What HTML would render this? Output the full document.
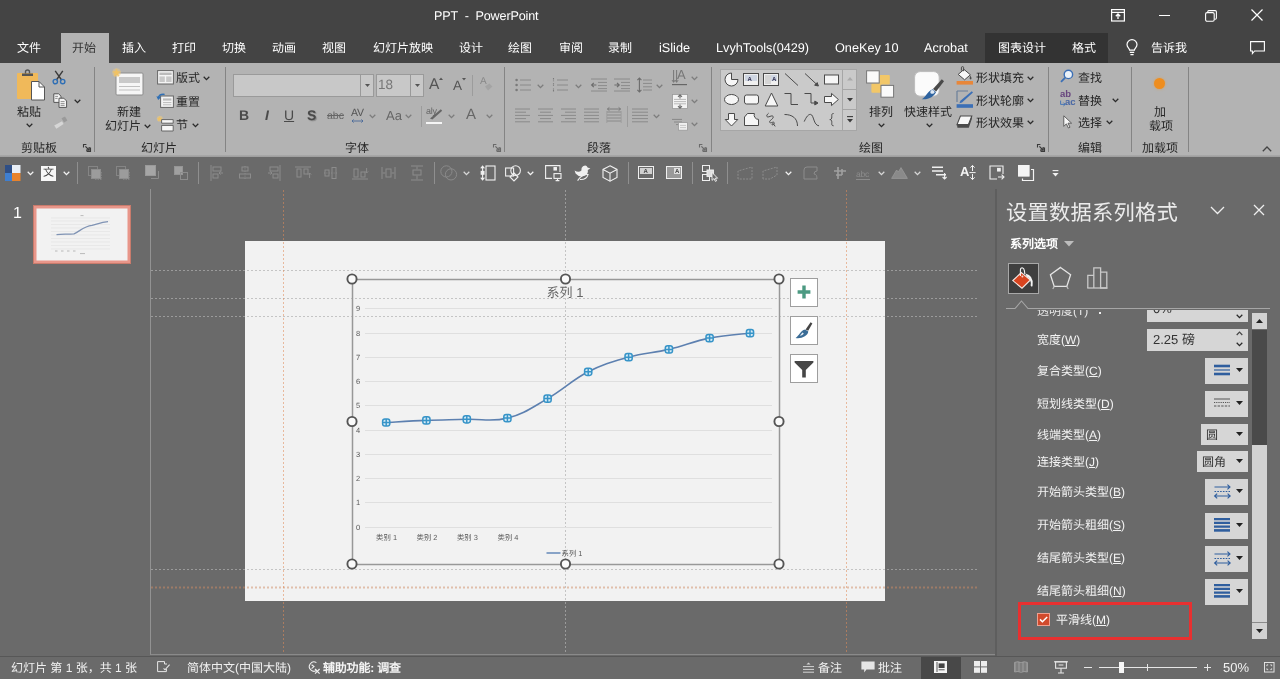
<!DOCTYPE html>
<html lang="zh-CN">
<head>
<meta charset="utf-8">
<title>PPT - PowerPoint</title>
<style>
*{box-sizing:border-box;margin:0;padding:0}
html,body{width:1280px;height:679px;overflow:hidden;background:#6a6a6a}
body{font-family:"Liberation Sans",sans-serif;font-size:13px;color:#fff;position:relative;will-change:transform;-webkit-font-smoothing:antialiased;text-rendering:geometricPrecision}
.abs,.t,.rt,.qt{position:absolute}
.t{white-space:nowrap;line-height:16px;font-size:12px;color:#fff}
.l{font-size:12.7px}
.rt{white-space:nowrap;line-height:14px;font-size:12px;color:#262626}
#title{left:0;top:0;width:1280px;height:63px;background:#444}
#ribbon{left:0;top:63px;width:1280px;height:94px;background:#b3b3b3}
#ribbonline{left:0;top:155px;width:1280px;height:2px;background:linear-gradient(#aaa,#9c9c9c)}
#qat{left:0;top:157px;width:1280px;height:30px;background:#6a6a6a}
#work{left:0;top:187px;width:1280px;height:470px;background:#6a6a6a}
#status{left:0;top:656px;width:1280px;height:23px;background:#6a6a6a;border-top:1px solid #575757}
.sep{position:absolute;width:1px;background:#848484}
svg{position:absolute;overflow:visible}
</style>
</head>
<body>
<!-- TITLE BAR -->
<div id="title" class="abs"></div>
<!--TITLE-START-->
<div class="t" style="left:434px;top:8px;font-size:12.6px;letter-spacing:-0.15px">PPT&nbsp; -&nbsp; PowerPoint</div>
<!-- window controls -->
<svg style="left:1111px;top:9px" width="14" height="13" viewBox="0 0 14 13" fill="none" stroke="#fff" stroke-width="1.2"><rect x="0.6" y="0.6" width="12.8" height="11.4"/><path d="M0.6 3.4H13.4" /><path d="M7 10V5.2M4.8 7.2L7 5L9.2 7.2" stroke-width="1.3"/></svg>
<div class="abs" style="left:1159px;top:15px;width:11px;height:1px;background:#fff"></div>
<svg style="left:1205px;top:9.5px" width="12" height="12" viewBox="0 0 12 12" fill="none" stroke="#fff" stroke-width="1.1"><rect x="0.6" y="2.6" width="8.6" height="8.6" rx="1.5"/><path d="M2.8 2.4V1.6Q2.8 0.6 3.8 0.6H10.2Q11.4 0.6 11.4 1.8V8Q11.4 9.2 10.2 9.2H9.4"/></svg>
<svg style="left:1251px;top:9px" width="12" height="12" viewBox="0 0 12 12" fill="none" stroke="#fff" stroke-width="1.2"><path d="M0.5 0.5L11.5 11.5M11.5 0.5L0.5 11.5"/></svg>
<!-- tabs -->
<div class="abs" style="left:61px;top:33px;width:48px;height:30px;background:#b3b3b3"></div>
<div class="abs" style="left:985px;top:33px;width:123px;height:30px;background:#333"></div>
<div class="t" style="left:17px;top:40px">文件</div>
<div class="t" style="left:72px;top:40px;color:#333">开始</div>
<div class="t" style="left:122px;top:40px">插入</div>
<div class="t" style="left:172px;top:40px">打印</div>
<div class="t" style="left:222px;top:40px">切换</div>
<div class="t" style="left:272px;top:40px">动画</div>
<div class="t" style="left:322px;top:40px">视图</div>
<div class="t" style="left:373px;top:40px">幻灯片放映</div>
<div class="t" style="left:459px;top:40px">设计</div>
<div class="t" style="left:508px;top:40px">绘图</div>
<div class="t" style="left:559px;top:40px">审阅</div>
<div class="t" style="left:608px;top:40px">录制</div>
<div class="t l" style="left:659px;top:40px">iSlide</div>
<div class="t l" style="left:716px;top:40px">LvyhTools(0429)</div>
<div class="t l" style="left:835px;top:40px">OneKey 10</div>
<div class="t l" style="left:924px;top:40px">Acrobat</div>
<div class="t" style="left:998px;top:40px">图表设计</div>
<div class="t" style="left:1072px;top:40px">格式</div>
<svg style="left:1126px;top:39px" width="12" height="17" viewBox="0 0 12 17" fill="none" stroke="#fff" stroke-width="1.2"><path d="M3.6 11.2C3.6 9.4 1 8.6 1 5.6A5 5 0 0 1 11 5.6C11 8.6 8.4 9.4 8.4 11.2Z"/><path d="M3.8 13.4H8.2M4.4 15.6H7.6"/></svg>
<div class="t" style="left:1151px;top:40px">告诉我</div>
<svg style="left:1250px;top:41px" width="15" height="14" viewBox="0 0 15 14" fill="none" stroke="#fff" stroke-width="1.1"><path d="M0.6 0.6H14.4V10H4.6L2.4 12.6V10H0.6Z"/></svg>
<!--TITLE-END-->
<!-- RIBBON -->
<div id="ribbon" class="abs"></div>
<div id="ribbonline" class="abs"></div>
<!--R1-START-->
<svg width="0" height="0" style="left:0;top:0"><defs>
<symbol id="chev" viewBox="0 0 7 5" overflow="visible"><path d="M0.7 0.8L3.5 3.6L6.3 0.8" fill="none" stroke="#2b2b2b" stroke-width="1.3"/></symbol>
<symbol id="chevd" viewBox="0 0 7 5" overflow="visible"><path d="M0.7 0.8L3.5 3.6L6.3 0.8" fill="none" stroke="#7d7d7d" stroke-width="1.3"/></symbol>
<symbol id="chevw" viewBox="0 0 7 5" overflow="visible"><path d="M0.7 0.8L3.5 3.6L6.3 0.8" fill="none" stroke="#f2f2f2" stroke-width="1.3"/></symbol>
<symbol id="launch" viewBox="0 0 8 8" overflow="visible"><path d="M0.5 3.4V0.5H3.4M7.5 3.6V7.5H3.6" fill="none" stroke="#3a3a3a" stroke-width="1.1"/><path d="M2.4 2.4L6 6M6.2 3V6.2H3" fill="none" stroke="#3a3a3a" stroke-width="1.2"/></symbol>
</defs></svg>
<!-- separators -->
<div class="sep" style="left:94px;top:67px;height:85px"></div>
<div class="sep" style="left:225px;top:67px;height:85px"></div>
<div class="sep" style="left:504px;top:67px;height:85px"></div>
<div class="sep" style="left:711px;top:67px;height:85px"></div>
<div class="sep" style="left:1048px;top:67px;height:85px"></div>
<div class="sep" style="left:1131px;top:67px;height:85px"></div>
<div class="sep" style="left:1188px;top:67px;height:85px"></div>
<!-- ===== Clipboard ===== -->
<svg style="left:16px;top:69px" width="30" height="32" viewBox="0 0 30 32">
 <rect x="1" y="4" width="21" height="26" rx="1" fill="#f0b95a"/>
 <path d="M6 4.5H17V7H6Z" fill="#555"/><path d="M9.5 4.5V2.8Q9.5 1 11.5 1Q13.5 1 13.5 2.8V4.5" fill="none" stroke="#555" stroke-width="1.4"/>
 <path d="M15.5 12.5H23L28.5 18V31H15.5Z" fill="#fff" stroke="#555" stroke-width="1"/><path d="M23 12.5V18H28.5" fill="none" stroke="#555" stroke-width="1"/>
</svg>
<div class="rt" style="left:17px;top:105px">粘贴</div>
<svg style="left:26px;top:123px" width="7" height="5"><use href="#chev"/></svg>
<!-- scissors -->
<svg style="left:52px;top:70px" width="14" height="15" viewBox="0 0 14 15" fill="none">
 <path d="M3.2 0.8L9.6 10M10.8 0.8L4.4 10" stroke="#3b3b3b" stroke-width="1.4"/>
 <circle cx="3.3" cy="11.6" r="2.2" stroke="#2f6fb5" stroke-width="1.4"/><circle cx="10.7" cy="11.6" r="2.2" stroke="#2f6fb5" stroke-width="1.4"/>
</svg>
<!-- copy -->
<svg style="left:53px;top:93px" width="15" height="15" viewBox="0 0 15 15">
 <path d="M0.8 0.8H5.6L8 3.2V9.4H0.8Z" fill="#f4f4f4" stroke="#555" stroke-width="1"/>
 <path d="M6 5.2H10.8L13.6 8V14.4H6Z" fill="#f4f4f4" stroke="#555" stroke-width="1"/>
 <path d="M2.2 3.4H5M2.2 5.4H4.6M7.6 8.6H11.6M7.6 10.6H11.6M7.6 12.4H11.6" stroke="#777" stroke-width="0.8"/>
</svg>
<svg style="left:74px;top:99px" width="7" height="5"><use href="#chev"/></svg>
<!-- format painter (disabled) -->
<svg style="left:53px;top:116px" width="16" height="14" viewBox="0 0 16 14">
 <path d="M8.5 2.2L12 0.6L14.4 4.6L11 6.4Z" fill="#9a9a9a"/><path d="M1.2 9.5L9 5.2L10.6 8L3.4 12.8Z" fill="#d6d6d6"/>
</svg>
<div class="rt" style="left:21px;top:141px">剪贴板</div>
<svg style="left:83px;top:144px" width="8" height="8"><use href="#launch"/></svg>
<!-- ===== Slides ===== -->
<svg style="left:112px;top:68px" width="32" height="28" viewBox="0 0 32 28">
 <rect x="4" y="5" width="27" height="22" rx="1" fill="#f6f6f6" stroke="#8c8c8c" stroke-width="1"/>
 <rect x="7" y="9" width="21" height="6" fill="#c9c9c9"/><path d="M7 18.5H28M7 22H28" stroke="#c0c0c0" stroke-width="1.2"/>
 <circle cx="4.6" cy="4.6" r="4.4" fill="#f3cd7c" opacity="0.45"/><path d="M4.5 0.5L5.7 3.3L8.6 3.6L6.4 5.6L7 8.5L4.5 7L2 8.5L2.6 5.6L0.4 3.6L3.3 3.3Z" fill="#f0c264"/>
</svg>
<div class="rt" style="left:117px;top:105px">新建</div>
<div class="rt" style="left:105px;top:119px">幻灯片</div>
<svg style="left:144px;top:124px" width="7" height="5"><use href="#chev"/></svg>
<!-- layout -->
<svg style="left:157px;top:70px" width="17" height="15" viewBox="0 0 17 15">
 <rect x="0.6" y="0.6" width="15.8" height="13.4" fill="#f4f4f4" stroke="#666" stroke-width="1"/>
 <rect x="2.4" y="2.6" width="12.2" height="2.4" fill="#bbb"/><rect x="2.4" y="6.4" width="5.4" height="5.6" fill="#c8c8c8"/><rect x="9.2" y="6.4" width="5.4" height="5.6" fill="#c8c8c8"/>
</svg>
<div class="rt" style="left:176px;top:71px">版式</div>
<svg style="left:203px;top:76px" width="7" height="5"><use href="#chev"/></svg>
<!-- reset -->
<svg style="left:156px;top:92px" width="18" height="16" viewBox="0 0 18 16">
 <rect x="4.6" y="4" width="12.8" height="11.4" fill="#f4f4f4" stroke="#666" stroke-width="1"/>
 <rect x="7" y="6.4" width="8.4" height="2.2" fill="#bbb"/><path d="M7 10.6H15.4M7 12.8H15.4" stroke="#bbb" stroke-width="1"/>
 <path d="M2.2 6.2Q3.4 1.6 8.6 2.4" fill="none" stroke="#2f6fb5" stroke-width="1.5"/><path d="M0.4 4.2L2.2 8L5 5.2Z" fill="#2f6fb5"/>
</svg>
<div class="rt" style="left:176px;top:95px">重置</div>
<!-- section -->
<svg style="left:157px;top:116px" width="17" height="16" viewBox="0 0 17 16">
 <circle cx="2.8" cy="2.8" r="3" fill="#f3cd7c" opacity="0.5"/><path d="M2.6 0.2L3.3 2L5.2 2.2L3.8 3.4L4.2 5.2L2.6 4.2L1 5.2L1.4 3.4L0 2.2L1.9 2Z" fill="#f0c264"/>
 <path d="M4.6 3.6H16.2V7.2H4.6Z" fill="#f6f6f6" stroke="#666" stroke-width="1"/><path d="M4.6 9.4H16.2V15H4.6Z" fill="#f6f6f6" stroke="#666" stroke-width="1"/>
</svg>
<div class="rt" style="left:176px;top:118px">节</div>
<svg style="left:192px;top:123px" width="7" height="5"><use href="#chev"/></svg>
<div class="rt" style="left:141px;top:141px">幻灯片</div>
<!-- ===== Font ===== -->
<div class="abs" style="left:233px;top:74px;width:141px;height:23px;background:#c8c8c8;border:1px solid #9a9a9a"></div>
<div class="abs" style="left:360px;top:75px;width:1px;height:21px;background:#9a9a9a"></div>
<svg style="left:364.5px;top:84px" width="5" height="3" viewBox="0 0 5 3"><path d="M0 0H5L2.5 3Z" fill="#555"/></svg>
<div class="abs" style="left:376px;top:74px;width:48px;height:23px;background:#c8c8c8;border:1px solid #9a9a9a"></div>
<div class="abs" style="left:410px;top:75px;width:1px;height:21px;background:#9a9a9a"></div>
<svg style="left:414.5px;top:84px" width="5" height="3" viewBox="0 0 5 3"><path d="M0 0H5L2.5 3Z" fill="#555"/></svg>
<div class="rt" style="left:378px;top:78px;font-size:13.5px;color:#777">18</div>
<div class="rt" style="left:429px;top:77px;font-size:15.5px;line-height:16px;color:#555">A</div>
<svg style="left:439px;top:77px" width="4" height="3" viewBox="0 0 4 3"><path d="M0 3L2 0.4L4 3Z" fill="#555"/></svg>
<div class="rt" style="left:453px;top:79px;font-size:13.5px;line-height:14px;color:#555">A</div>
<svg style="left:462px;top:78px" width="4" height="3" viewBox="0 0 4 3"><path d="M0 0L2 2.6L4 0Z" fill="#555"/></svg>
<div class="sep" style="left:472px;top:75px;height:21px;background:#9c9c9c"></div>
<div class="rt" style="left:480px;top:75px;font-size:10px;color:#888">A</div>
<svg style="left:482px;top:83px" width="11" height="8" viewBox="0 0 11 8"><path d="M3 3.4L7.4 0.6L10.4 3.6L6 7.4Z" fill="#a4a4a4"/></svg>
<!-- row2 -->
<div class="rt" style="left:239px;top:107px;font-size:14px;line-height:16px;font-weight:bold;color:#4a4a4a">B</div>
<div class="rt" style="left:265px;top:107px;font-size:14px;line-height:16px;font-style:italic;font-weight:bold;color:#4a4a4a">I</div>
<div class="rt" style="left:284px;top:107px;font-size:14px;line-height:16px;text-decoration:underline;color:#4a4a4a">U</div>
<div class="rt" style="left:307px;top:107px;font-size:14px;line-height:16px;font-weight:bold;color:#4a4a4a;text-shadow:1px 1px 1px #888">S</div>
<div class="rt" style="left:327px;top:109px;font-size:10.5px;text-decoration:line-through;color:#666">abc</div>
<div class="rt" style="left:351px;top:106px;font-size:10.5px;color:#555;letter-spacing:-0.3px">AV</div>
<svg style="left:351px;top:119px" width="13" height="4" viewBox="0 0 13 4"><path d="M1 2H12M2.6 0.4L1 2L2.6 3.6M10.4 0.4L12 2L10.4 3.6" fill="none" stroke="#4a6a9a" stroke-width="0.9"/></svg>
<svg style="left:369px;top:114px" width="7" height="5"><use href="#chevd"/></svg>
<div class="rt" style="left:386px;top:108px;font-size:13px;line-height:16px;color:#666">Aa</div>
<svg style="left:405px;top:114px" width="7" height="5"><use href="#chevd"/></svg>
<div class="sep" style="left:421px;top:106px;height:21px;background:#9c9c9c"></div>
<div class="rt" style="left:426px;top:104px;font-size:9px;color:#666;letter-spacing:-0.3px">aly</div>
<svg style="left:428px;top:108px" width="15" height="12" viewBox="0 0 15 12"><path d="M2 10.5L12.8 1.2L14.2 2.8L4.4 11.4Z" fill="#666"/></svg>
<div class="abs" style="left:426px;top:121.5px;width:16px;height:2.5px;background:#f5f5f5"></div>
<svg style="left:448px;top:114px" width="7" height="5"><use href="#chevd"/></svg>
<div class="rt" style="left:466px;top:106px;font-size:15px;line-height:17px;color:#666">A</div>
<svg style="left:486px;top:114px" width="7" height="5"><use href="#chevd"/></svg>
<div class="rt" style="left:345px;top:141px">字体</div>
<svg style="left:493px;top:144px" width="8" height="8" opacity="0.6"><use href="#launch"/></svg>
<!--R1-END-->
<!--R2-START-->
<!-- ===== Paragraph (disabled look) ===== -->
<svg style="left:515px;top:78px" width="16" height="14" viewBox="0 0 16 14"><circle cx="1.6" cy="2" r="1.3" fill="#7a7a7a"/><circle cx="1.6" cy="7" r="1.3" fill="#7a7a7a"/><circle cx="1.6" cy="12" r="1.3" fill="#7a7a7a"/><path d="M5 2H16M5 7H16M5 12H16" stroke="#8a8a8a" stroke-width="1"/></svg>
<svg style="left:537px;top:84px" width="7" height="5"><use href="#chevd"/></svg>
<svg style="left:552px;top:78px" width="16" height="14" viewBox="0 0 16 14"><path d="M1.5 0V3.4M1.5 5.2V8.6M1.5 10.4V14" stroke="#7a7a7a" stroke-width="1.1" stroke-dasharray="1 0.6"/><path d="M5 2H16M5 7H16M5 12H16" stroke="#8a8a8a" stroke-width="1"/></svg>
<svg style="left:575px;top:84px" width="7" height="5"><use href="#chevd"/></svg>
<svg style="left:591px;top:78px" width="16" height="14" viewBox="0 0 16 14"><path d="M0 1H16M7 4.4H16M7 7.6H16M0 13H16M7 10.6H16" stroke="#8a8a8a" stroke-width="1"/><path d="M5.4 7H0.8M2.8 4.8L0.6 7L2.8 9.2" fill="none" stroke="#6c6c6c" stroke-width="1.2"/></svg>
<svg style="left:614px;top:78px" width="16" height="14" viewBox="0 0 16 14"><path d="M0 1H16M7 4.4H16M7 7.6H16M0 13H16M7 10.6H16" stroke="#8a8a8a" stroke-width="1"/><path d="M0.4 7H5M3 4.8L5.2 7L3 9.2" fill="none" stroke="#6c6c6c" stroke-width="1.2"/></svg>
<svg style="left:637px;top:77px" width="15" height="16" viewBox="0 0 15 16"><path d="M6 3H15M6 6.4H15M6 9.8H15M6 13H15" stroke="#8a8a8a" stroke-width="1"/><path d="M2.4 1V15M0.4 3.2L2.4 1L4.4 3.2M0.4 12.8L2.4 15L4.4 12.8" fill="none" stroke="#6c6c6c" stroke-width="1.1"/></svg>
<svg style="left:656px;top:84px" width="7" height="5"><use href="#chevd"/></svg>
<!-- text direction -->
<svg style="left:672px;top:69px" width="16" height="17" viewBox="0 0 16 17"><path d="M1.6 1V13M4.6 1V13" stroke="#777" stroke-width="1"/><path d="M0 11L1.6 13.4L3.2 11M3 11L4.6 13.4L6.2 11" fill="none" stroke="#777" stroke-width="0.9"/><path d="M0 15.6H15" stroke="#666" stroke-width="1.2"/></svg>
<div class="rt" style="left:677px;top:68px;font-size:13px;color:#777">A</div>
<svg style="left:691px;top:76px" width="7" height="5"><use href="#chevd"/></svg>
<!-- align text -->
<svg style="left:672px;top:94px" width="16" height="15" viewBox="0 0 16 15"><rect x="0.5" y="0.5" width="15" height="14" fill="#f3f3f3" stroke="#999" stroke-width="0.8"/><path d="M2 5.4H14M2 7.6H14M2 9.8H14" stroke="#aaa" stroke-width="0.8"/><path d="M8 0.8V4.4M6 2.8L8 0.8L10 2.8M8 14.2V10.6M6 12.2L8 14.2L10 12.2" fill="none" stroke="#6c6c6c" stroke-width="1.1"/></svg>
<svg style="left:691px;top:99px" width="7" height="5"><use href="#chevd"/></svg>
<!-- smartart -->
<svg style="left:672px;top:118px" width="16" height="13" viewBox="0 0 16 13"><path d="M0 1.4H10M2 4H10M4 6.6H8" stroke="#888" stroke-width="1"/><rect x="6.4" y="4.6" width="9" height="7.6" fill="#f0f0f0" stroke="#999" stroke-width="0.8"/><path d="M8 7.4H14M8 9.6H14" stroke="#bbb" stroke-width="0.8"/></svg>
<svg style="left:691px;top:122px" width="7" height="5"><use href="#chevd"/></svg>
<!-- row2 aligns -->
<svg style="left:515px;top:108px" width="16" height="15" viewBox="0 0 16 15"><path d="M0 1H15M0 4.2H11M0 7.4H15M0 10.6H11M0 13.8H15" stroke="#8a8a8a" stroke-width="1"/></svg>
<svg style="left:538px;top:108px" width="15" height="15" viewBox="0 0 15 15"><path d="M0 1H15M2 4.2H13M0 7.4H15M2 10.6H13M0 13.8H15" stroke="#8a8a8a" stroke-width="1"/></svg>
<svg style="left:561px;top:108px" width="15" height="15" viewBox="0 0 15 15"><path d="M0 1H15M4 4.2H15M0 7.4H15M4 10.6H15M0 13.8H15" stroke="#8a8a8a" stroke-width="1"/></svg>
<svg style="left:584px;top:108px" width="15" height="15" viewBox="0 0 15 15"><path d="M0 1H15M0 4.2H15M0 7.4H15M0 10.6H15M0 13.8H15" stroke="#8a8a8a" stroke-width="1"/></svg>
<svg style="left:606px;top:107px" width="16" height="17" viewBox="0 0 16 17"><path d="M1 5H15M1 8H15M1 11H15M1 14H15" stroke="#8a8a8a" stroke-width="1"/><path d="M1.5 2H14.5M3.4 0.4L1.4 2L3.4 3.6M12.6 0.4L14.6 2L12.6 3.6" fill="none" stroke="#7a7a7a" stroke-width="1"/><path d="M0.8 4V16M15.2 4V16" stroke="#999" stroke-width="0.8"/></svg>
<div class="sep" style="left:627px;top:106px;height:21px;background:#9c9c9c"></div>
<svg style="left:632px;top:108px" width="16" height="15" viewBox="0 0 16 15"><path d="M0 1H16M0 4.2H16M0 7.4H16M0 10.6H16M0 13.8H16" stroke="#8a8a8a" stroke-width="1"/></svg>
<svg style="left:653px;top:114px" width="7" height="5"><use href="#chevd"/></svg>
<div class="rt" style="left:587px;top:141px">段落</div>
<svg style="left:699px;top:144px" width="8" height="8" opacity="0.6"><use href="#launch"/></svg>
<!-- ===== Drawing ===== -->
<div class="abs" style="left:720px;top:69px;width:137px;height:62px;background:#cacaca;border:1px solid #a6a6a6"></div>
<div class="abs" style="left:842px;top:69px;width:1px;height:62px;background:#a6a6a6"></div>
<div class="abs" style="left:842px;top:89px;width:15px;height:1px;background:#a6a6a6"></div>
<div class="abs" style="left:842px;top:109px;width:15px;height:1px;background:#a6a6a6"></div>
<svg style="left:847px;top:77px" width="6" height="4" viewBox="0 0 6 4"><path d="M0 3.6H6L3 0Z" fill="#aaa"/></svg>
<svg style="left:847px;top:98px" width="6" height="4" viewBox="0 0 6 4"><path d="M0 0H6L3 3.6Z" fill="#3a3a3a"/></svg>
<svg style="left:847px;top:116px" width="6" height="7" viewBox="0 0 6 7"><path d="M0 0.6H6" stroke="#3a3a3a" stroke-width="1.1"/><path d="M0 3H6L3 6.6Z" fill="#3a3a3a"/></svg>
<!-- shapes: 18x16 cells -->
<svg style="left:722px;top:70px" width="119" height="60" viewBox="0 0 119 60" fill="#f6f6f6" stroke="#4a4a4a" stroke-width="1">
 <!-- row1 -->
 <path d="M9.5 3A6.5 6.5 0 1 0 16 9.5H9.5Z"/>
 <rect x="21.5" y="3.5" width="15" height="12" fill="#f0f0f0"/><rect x="23" y="5" width="12" height="6" fill="#cfd6e2" stroke="none"/><text x="25.4" y="10.6" font-size="6" font-weight="bold" stroke="none" fill="#335" font-family="Liberation Sans">A</text>
 <rect x="41.5" y="3.5" width="15" height="12" fill="#f0f0f0"/><rect x="49" y="5" width="6" height="6" fill="#cfd6e2" stroke="none"/><text x="50" y="10.6" font-size="6" font-weight="bold" stroke="none" fill="#335" font-family="Liberation Sans">A</text><path d="M44 5V14M46 5V14M48 5V14" stroke="#999" stroke-width="0.6"/>
 <path d="M63 3.5L76 15.5" fill="none"/>
 <path d="M83 3.5L95.4 15" fill="none"/><path d="M96.4 16L92.6 15.2L95.2 12.6Z" fill="#4a4a4a"/>
 <rect x="102.5" y="5" width="14" height="9"/>
 <!-- row2 -->
 <ellipse cx="9.5" cy="29.5" rx="7" ry="5"/>
 <rect x="22.5" y="25" width="14" height="9" rx="2"/>
 <path d="M49.5 23L55.8 36H43.2Z"/>
 <path d="M62.5 23.5H69V34.5H76" fill="none"/>
 <path d="M82.5 23.5H89V33H94.4" fill="none"/><path d="M96 33L92.8 35L92.8 31Z" fill="#4a4a4a"/>
 <path d="M102.5 26.5H109.5V23.4L116.4 29.5L109.5 35.6V32.5H102.5Z"/>
 <!-- row3 -->
 <path d="M6.5 43.5H12.5V49.5H15.8L9.5 56L3.2 49.5H6.5Z"/>
 <path d="M22.5 47L25.5 43.5H32.4A4.4 4.4 0 0 0 36.5 49.4V55.5H22.5Z"/>
 <path d="M46.6 43.2C43.4 45.8 44.6 48 48 46.4C51.6 44.8 52.4 47.4 49.4 49.6C46.4 51.8 47.4 53.6 50.2 52.4C52.6 51.4 53 53.6 51.2 54.6C49.4 55.6 49.6 53.2 51.4 53.8L53.2 56.4" fill="none"/>
 <path d="M62.5 44.5C70 44.5 75.5 48 75.5 56" fill="none"/>
 <path d="M82.2 51.6C84.4 46.6 86.4 44.2 88.6 44.4C92 44.8 91.4 55.4 97 55.8" fill="none"/>
 <path d="M111.6 43.5C109.4 43.5 109.8 45 109.8 46.8C109.8 48.6 109.4 49.6 107.8 49.6C109.4 49.6 109.8 50.6 109.8 52.4C109.8 54.2 109.4 55.8 111.6 55.8" fill="none"/>
</svg>
<!-- arrange -->
<svg style="left:866px;top:70px" width="29" height="28" viewBox="0 0 29 28">
 <rect x="13.4" y="5" width="10.4" height="9.4" rx="1" fill="#f2c768"/><rect x="5.4" y="13.4" width="10" height="9.4" rx="1" fill="#f2c768"/>
 <rect x="0.6" y="0.8" width="12.6" height="12.2" fill="#fafafa" stroke="#777" stroke-width="1"/>
 <rect x="15" y="15.4" width="12.6" height="11.8" fill="#fafafa" stroke="#777" stroke-width="1"/>
</svg>
<div class="rt" style="left:869px;top:105px">排列</div>
<svg style="left:878px;top:123px" width="7" height="5"><use href="#chev"/></svg>
<!-- quick styles -->
<svg style="left:913px;top:70px" width="32" height="32" viewBox="0 0 32 32">
 <rect x="1.6" y="1.6" width="24.6" height="24.6" rx="5.5" fill="#fbfbfb" stroke="#bcbcbc" stroke-width="1"/>
 <path d="M28.8 9.2L31 11.2L23.2 21.6L20 19Z" fill="#4a4a4a"/><path d="M19.6 19.2L23 22C21.4 26.4 15.4 30 8.6 29.2C12.6 27.6 14 21.4 19.6 19.2Z" fill="#2f639f"/><path d="M18.2 20.4C19.6 19.4 21.6 20.8 21.6 22.6C20.8 24 18.8 24.2 17.6 23.2C17 22.2 17.4 21 18.2 20.4Z" fill="#dfe9f4"/>
</svg>
<div class="rt" style="left:904px;top:105px">快速样式</div>
<svg style="left:926px;top:123px" width="7" height="5"><use href="#chev"/></svg>
<!-- shape fill -->
<svg style="left:956px;top:66px" width="18" height="19" viewBox="0 0 18 19">
 <path d="M8 3.4L14.4 8.8L8.6 13.8L2.2 8.4Z" fill="#f7f7f7" stroke="#4a4a4a" stroke-width="1"/>
 <path d="M7.6 5.2V1.6Q7.6 0.6 6.6 0.6Q5.4 0.6 5.4 1.8V4.6" fill="none" stroke="#4a4a4a" stroke-width="1"/>
 <path d="M14.2 9.4Q16.2 12 15.2 13.2Q14.2 13.8 13.6 12.6Z" fill="#4a4a4a"/>
 <rect x="0.6" y="15" width="16.4" height="3.6" fill="#e8873a"/>
</svg>
<div class="rt" style="left:976px;top:70.5px">形状填充</div>
<svg style="left:1027px;top:76px" width="7" height="5"><use href="#chev"/></svg>
<svg style="left:956px;top:89.6px" width="18" height="18" viewBox="0 0 18 18">
 <path d="M1 1H12M1 1V12" stroke="#6a7f99" stroke-width="1.2" fill="none"/><path d="M15.8 1.2L17 2.4L6 12.4L3.4 13.2L4.4 10.8Z" fill="#3b6fb6"/>
 <rect x="0.6" y="14.2" width="16.4" height="3.6" fill="#3b6fb6"/>
</svg>
<div class="rt" style="left:976px;top:93.5px">形状轮廓</div>
<svg style="left:1027px;top:98px" width="7" height="5"><use href="#chev"/></svg>
<svg style="left:956px;top:115px" width="17" height="14" viewBox="0 0 17 14">
 <path d="M4.4 1H15.8L12.4 9.6H1Z" fill="#f7f7f7" stroke="#4a4a4a" stroke-width="1.1"/><path d="M1 9.6H12.4L15.8 1V4L12.8 12.8H1.4Z" fill="#4a4a4a"/>
</svg>
<div class="rt" style="left:976px;top:116px">形状效果</div>
<svg style="left:1027px;top:120px" width="7" height="5"><use href="#chev"/></svg>
<div class="rt" style="left:859px;top:141px">绘图</div>
<svg style="left:1037px;top:144px" width="8" height="8"><use href="#launch"/></svg>
<!-- ===== Editing ===== -->
<svg style="left:1060px;top:69px" width="14" height="14" viewBox="0 0 14 14"><circle cx="8.4" cy="5.4" r="4.2" fill="#eaf1f8" stroke="#3b6fb6" stroke-width="1.4"/><path d="M5.2 8.6L1 12.8" stroke="#3b6fb6" stroke-width="1.8"/></svg>
<div class="rt" style="left:1078px;top:71px">查找</div>
<div class="rt" style="left:1060px;top:90px;font-size:9.5px;line-height:9px;font-weight:bold;color:#69467f">ab</div>
<div class="rt" style="left:1065px;top:98px;font-size:9.5px;line-height:9px;font-weight:bold;color:#4a68a4">ac</div>
<svg style="left:1060px;top:100px" width="6" height="6" viewBox="0 0 6 6"><path d="M0.6 0.6V4.4H5M3.4 2.6L5.2 4.4L3.4 6" fill="none" stroke="#3b6fb6" stroke-width="0.9"/></svg>
<div class="rt" style="left:1078px;top:94px">替换</div>
<svg style="left:1112px;top:98px" width="7" height="5"><use href="#chev"/></svg>
<svg style="left:1063px;top:115px" width="10" height="14" viewBox="0 0 10 14"><path d="M0.8 0.8V11.4L3.4 8.8L5.4 13L7 12.2L5 8.2H8.6Z" fill="#f7f7f7" stroke="#555" stroke-width="0.9"/></svg>
<div class="rt" style="left:1078px;top:116px">选择</div>
<svg style="left:1106px;top:120px" width="7" height="5"><use href="#chev"/></svg>
<div class="rt" style="left:1078px;top:141px">编辑</div>
<!-- ===== Add-ins ===== -->
<div class="abs" style="left:1154px;top:78px;width:11px;height:11px;border-radius:6px;background:#ee8d1e;box-shadow:0 0 3px #d9a25e"></div>
<div class="rt" style="left:1154px;top:105px">加</div>
<div class="rt" style="left:1149px;top:119px">载项</div>
<div class="rt" style="left:1142px;top:141px">加载项</div>
<svg style="left:1262px;top:146px" width="10" height="6" viewBox="0 0 10 6"><path d="M0.8 5.2L5 1L9.2 5.2" fill="none" stroke="#444" stroke-width="1.3"/></svg>
<!--R2-END-->
<!--RIBBON-CONTENT-->
<!-- QAT -->
<div id="qat" class="abs"></div>
<!--Q-START-->
<svg width="0" height="0" style="left:0;top:0"><defs>
<symbol id="qd" viewBox="0 0 14 14" overflow="visible"><rect x="0.5" y="0.5" width="9" height="9" fill="none" stroke="#858585"/><rect x="3.5" y="3.5" width="9" height="9" fill="#9c9c9c" stroke="#8e8e8e"/><path d="M13.5 6V13.5H6" fill="none" stroke="#808080" stroke-dasharray="1.5 1"/></symbol>
</defs></svg>
<svg style="left:5px;top:165px" width="16" height="16" viewBox="0 0 16 16"><rect x="0" y="0" width="7" height="8" fill="#2f4f86"/><rect x="7" y="0" width="8.5" height="8" fill="#e8eef6"/><rect x="0" y="8" width="7" height="8" fill="#3f7fd0"/><rect x="7" y="8" width="8.5" height="8" fill="#e8832c"/></svg>
<svg style="left:27px;top:171px" width="7" height="5"><use href="#chevw"/></svg>
<div class="abs" style="left:41px;top:166px;width:15px;height:15px;background:#f7f7f7"></div>
<div class="rt" style="left:43px;top:167px;font-size:11px;line-height:13px;color:#444">文</div>
<svg style="left:63px;top:171px" width="7" height="5"><use href="#chevw"/></svg>
<div class="sep" style="left:77px;top:162px;height:22px;background:#8f8f8f"></div>
<svg style="left:88px;top:166px" width="14" height="14"><use href="#qd"/></svg>
<svg style="left:116px;top:166px" width="14" height="14"><use href="#qd"/></svg>
<svg style="left:145px;top:165px" width="14" height="14" viewBox="0 0 14 14"><rect x="0.5" y="0.5" width="10" height="10" fill="#a6a6a6" stroke="#9a9a9a"/><path d="M6 13.5H13.5V6" fill="none" stroke="#8c8c8c"/></svg>
<svg style="left:174px;top:166px" width="14" height="14" viewBox="0 0 14 14"><rect x="0.5" y="0.5" width="8" height="8" fill="#a0a0a0" stroke="#959595"/><rect x="6.5" y="6.5" width="7" height="7" fill="none" stroke="#8c8c8c"/></svg>
<div class="sep" style="left:198px;top:162px;height:22px;background:#8f8f8f"></div>
<svg style="left:210px;top:165px" width="14" height="16" viewBox="0 0 14 16" fill="none" stroke="#8c8c8c" stroke-width="1"><path d="M1 0V16"/><rect x="3" y="2" width="8" height="4"/><rect x="3" y="9" width="5" height="4"/><path d="M13 8H9M10.6 6.4L9 8L10.6 9.6"/></svg>
<svg style="left:238px;top:166px" width="14" height="14" viewBox="0 0 14 14" fill="none" stroke="#8c8c8c" stroke-width="1"><rect x="4" y="1" width="6" height="4"/><rect x="1.5" y="8" width="11" height="4"/><path d="M7 0V14" stroke-dasharray="1 1.4"/></svg>
<svg style="left:267px;top:165px" width="14" height="16" viewBox="0 0 14 16" fill="none" stroke="#8c8c8c" stroke-width="1"><path d="M13 0V16"/><rect x="3" y="2" width="8" height="4"/><rect x="6" y="9" width="5" height="4"/><path d="M1 8H5M3.4 6.4L5 8L3.4 9.6"/></svg>
<svg style="left:295px;top:166px" width="16" height="14" viewBox="0 0 16 14" fill="none" stroke="#8c8c8c" stroke-width="1"><path d="M0 1H16"/><rect x="2" y="3" width="4" height="8"/><rect x="9" y="3" width="4" height="5"/><path d="M14.6 12V7M13 8.6L14.6 7L16.2 8.6" /></svg>
<svg style="left:324px;top:166px" width="14" height="14" viewBox="0 0 14 14" fill="none" stroke="#8c8c8c" stroke-width="1"><rect x="1" y="4" width="4" height="6"/><rect x="8" y="1.5" width="4" height="11"/><path d="M0 7H14" stroke-dasharray="1 1.4"/></svg>
<svg style="left:352px;top:166px" width="16" height="14" viewBox="0 0 16 14" fill="none" stroke="#8c8c8c" stroke-width="1"><path d="M0 13H16"/><rect x="2" y="3" width="4" height="8"/><rect x="9" y="6" width="4" height="5"/><path d="M14.6 2V7M13 5.4L14.6 7L16.2 5.4"/></svg>
<svg style="left:381px;top:166px" width="15" height="14" viewBox="0 0 15 14" fill="none" stroke="#8c8c8c" stroke-width="1"><path d="M1 1V13M14 1V13"/><rect x="5" y="3" width="5" height="8"/><path d="M1.6 7H4.4M10.6 7H13.4"/></svg>
<svg style="left:410px;top:165px" width="14" height="16" viewBox="0 0 14 16" fill="none" stroke="#8c8c8c" stroke-width="1"><path d="M1 1H13M1 15H13"/><rect x="3" y="5" width="8" height="5"/><path d="M7 1.6V4.4M7 10.6V14.4"/></svg>
<div class="sep" style="left:434px;top:162px;height:22px;background:#8f8f8f"></div>
<svg style="left:440px;top:165px" width="18" height="16" viewBox="0 0 18 16" fill="none" stroke="#8a8a8a" stroke-width="1"><circle cx="6.4" cy="6.4" r="5.6"/><circle cx="11" cy="9.4" r="5.6"/></svg>
<svg style="left:463px;top:171px" width="7" height="5"><use href="#chevw" opacity="0.8"/></svg>
<svg style="left:480px;top:165px" width="16" height="16" viewBox="0 0 16 16" fill="none" stroke="#f0f0f0" stroke-width="1.1"><rect x="6" y="1" width="9" height="14"/><path d="M2.6 1.4V14.6M0.8 3.4L2.6 1.2L4.4 3.4M0.8 12.6L2.6 14.8L4.4 12.6"/><rect x="1.2" y="6.4" width="2.8" height="2.8" fill="#f0f0f0"/></svg>
<svg style="left:505px;top:165px" width="17" height="17" viewBox="0 0 17 17" fill="none" stroke="#f0f0f0" stroke-width="1.1"><rect x="0.6" y="3" width="8" height="8"/><circle cx="10.6" cy="5.6" r="4.8"/><path d="M9 8L13 12L9 16L5 12Z"/></svg>
<svg style="left:527px;top:171px" width="7" height="5"><use href="#chevw"/></svg>
<svg style="left:545px;top:165px" width="17" height="16" viewBox="0 0 17 16" fill="none" stroke="#f0f0f0" stroke-width="1.1"><path d="M15 7V0.6H0.6V13.4H7"/><rect x="9" y="8.6" width="7" height="4.8"/><path d="M12.5 14V15.6M10.6 15.6H14.4"/><rect x="9" y="2.6" width="2.4" height="2.4" fill="#f0f0f0"/></svg>
<svg style="left:574px;top:164px" width="17" height="18" viewBox="0 0 17 18"><path d="M9 2.2Q12.4 0.4 13.6 3.4L16.4 4.4L13.8 6Q14.6 10.4 10 12Q5 13.6 1.6 9.6L0.6 6.4Q4.6 9 7.4 6.4Q7 3.6 9 2.2Z" fill="#f0f0f0"/><path d="M3.6 16.6Q8 10 14 10.6Q12.6 15.8 6 15.4" fill="none" stroke="#f0f0f0" stroke-width="1.1"/></svg>
<svg style="left:602px;top:165px" width="16" height="17" viewBox="0 0 16 17" fill="none" stroke="#f0f0f0" stroke-width="1.1"><path d="M8 0.8L15 4.4V12.4L8 16.2L1 12.4V4.4Z"/><path d="M1 4.4L8 8.2L15 4.4M8 8.2V16.2"/></svg>
<div class="sep" style="left:628px;top:162px;height:22px;background:#8f8f8f"></div>
<svg style="left:638px;top:166px" width="16" height="13" viewBox="0 0 16 13"><rect x="0.5" y="0.5" width="15" height="12" fill="none" stroke="#f0f0f0"/><rect x="2" y="2" width="12" height="6" fill="#d0d0d0"/><text x="5.4" y="7.4" font-size="6" font-weight="bold" fill="#444" font-family="Liberation Sans">A</text></svg>
<svg style="left:666px;top:166px" width="16" height="13" viewBox="0 0 16 13"><rect x="0.5" y="0.5" width="15" height="12" fill="#9a9a9a" stroke="#f0f0f0"/><rect x="8" y="2" width="6" height="6" fill="#e0e0e0"/><text x="9" y="7.4" font-size="6" font-weight="bold" fill="#444" font-family="Liberation Sans">A</text></svg>
<div class="sep" style="left:692px;top:162px;height:22px;background:#8f8f8f"></div>
<svg style="left:702px;top:165px" width="17" height="17" viewBox="0 0 17 17" fill="none" stroke="#f0f0f0" stroke-width="1"><rect x="0.5" y="0.5" width="7" height="6"/><rect x="0.5" y="9.5" width="7" height="6"/><rect x="5" y="5" width="6.4" height="6.4" fill="#e0e0e0"/><path d="M10 7.4V15.4L12 13.6L13.4 16.4L14.6 15.8L13.2 13.2H15.6Z" fill="#6a6a6a" stroke="#f4f4f4" stroke-width="0.9"/></svg>
<div class="sep" style="left:727px;top:162px;height:22px;background:#8f8f8f"></div>
<svg style="left:737px;top:166px" width="16" height="14" viewBox="0 0 16 14" fill="none" stroke="#8c8c8c" stroke-width="1" stroke-dasharray="2 1.2"><path d="M1 13V5L15 1V13Z"/></svg>
<svg style="left:762px;top:166px" width="16" height="14" viewBox="0 0 16 14" fill="none" stroke="#8c8c8c" stroke-width="1" stroke-dasharray="2 1.2"><path d="M1 13V5L15 1V9L8 13Z"/></svg>
<svg style="left:785px;top:171px" width="7" height="5"><use href="#chevw"/></svg>
<svg style="left:803px;top:166px" width="15" height="14" viewBox="0 0 15 14" fill="none" stroke="#8c8c8c" stroke-width="1"><path d="M1 13V4Q1 1 4 1H14V5Q11 5 11 8Q14 8 14 13Z"/></svg>
<svg style="left:833px;top:166px" width="14" height="14" viewBox="0 0 14 14" fill="none" stroke="#a0a0a0" stroke-width="1.6"><path d="M5 1V13M1 5H13M9 3V9M3 9H9"/></svg>
<div class="rt" style="left:856px;top:167px;font-size:8.5px;color:#8c8c8c;letter-spacing:-0.2px">abc</div>
<div class="abs" style="left:856px;top:179px;width:14px;height:1px;background:#8c8c8c"></div>
<svg style="left:878px;top:171px" width="7" height="5"><use href="#chevw" opacity="0.8"/></svg>
<svg style="left:891px;top:167px" width="17" height="12" viewBox="0 0 17 12"><path d="M0.6 11.4H16.4L10 0.6L7.4 5L5.6 3Z" fill="#8a8a8a" stroke="#999" stroke-width="0.8"/></svg>
<svg style="left:914px;top:171px" width="7" height="5"><use href="#chevw" opacity="0.8"/></svg>
<svg style="left:932px;top:166px" width="16" height="14" viewBox="0 0 16 14" fill="none" stroke="#f0f0f0" stroke-width="1.6"><path d="M0 1.2H11M0 5H11M4 8.8H14"/><path d="M12.6 7V13M10.6 11L12.6 13L14.6 11" stroke-width="1.1"/></svg>
<div class="t" style="left:960px;top:164px;font-size:13px;font-weight:bold;color:#f4f4f4">A</div>
<svg style="left:969px;top:165px" width="7" height="15" viewBox="0 0 7 15" fill="none" stroke="#f4f4f4" stroke-width="1"><path d="M3.5 0.6V6M1.4 2.6L3.5 0.4L5.6 2.6M3.5 14.4V9M1.4 12.4L3.5 14.6L5.6 12.4M0.4 7.6H6.6"/></svg>
<svg style="left:989px;top:165px" width="16" height="16" viewBox="0 0 16 16" fill="none" stroke="#f0f0f0" stroke-width="1.1"><path d="M14 9V1H1V14H8"/><rect x="8.6" y="3.4" width="2.6" height="2.6" fill="#f0f0f0"/><path d="M9 12H15M12.6 9.6L15 12L12.6 14.4" /></svg>
<svg style="left:1018px;top:165px" width="16" height="16" viewBox="0 0 16 16"><rect x="0.5" y="0.5" width="10.6" height="10.6" fill="#f4f4f4" stroke="#f4f4f4"/><path d="M4.5 13.5V15.5H15.5V4.5H13" fill="none" stroke="#f4f4f4" stroke-width="1.2"/></svg>
<svg style="left:1052px;top:170px" width="7" height="7" viewBox="0 0 7 7"><path d="M0.6 0.6H6.4" stroke="#f0f0f0" stroke-width="1.1"/><path d="M0.4 3H6.6L3.5 6.4Z" fill="#f0f0f0"/></svg>
<!--Q-END-->
<!-- WORKSPACE -->
<div id="work" class="abs"></div>
<!--W-START-->
<!-- thumbnails pane -->
<div class="abs" style="left:150px;top:189px;width:845px;height:466px;border-left:1px solid #929292;border-bottom:1px solid #8a8a8a"></div>
<div class="t" style="left:13px;top:205px;font-size:16px;line-height:18px">1</div>
<div class="abs" style="left:33px;top:205px;width:97.5px;height:58.5px;background:#f2f2f2;border:1px solid #c97b6c;box-shadow:inset 0 0 0 2.5px #e8968a"></div>
<svg style="left:36px;top:208px" width="92" height="52" viewBox="0 0 92 52"><path d="M15 10H74M15 13H74M15 16.5H74M15 20H74M15 23.5H74M15 27H74M15 30.5H74M15 34H74M15 37.5H74M15 41H74" stroke="#e4e4e4" stroke-width="0.7"/><path d="M20.5 26.6C26 26.2 32 26.2 38 25.8C44 23 48 18.4 56 17.4C62 15.8 66 14.2 72 13.6" fill="none" stroke="#7f93b4" stroke-width="1.3"/><path d="M19 43H21.5M25 43H27.5M31 43H33.5M37 43H39.5M44 45.6H49" stroke="#aaa" stroke-width="0.8"/><path d="M44.5 7.6H47.5" stroke="#aaa" stroke-width="0.8"/></svg>
<!-- slide -->
<div class="abs" style="left:245px;top:241px;width:640px;height:360px;background:#f2f2f2"></div>
<svg style="left:0;top:0" width="1280" height="679" viewBox="0 0 1280 679" fill="none">
<path d="M151 270.5H978" stroke="#b0b0b0" stroke-width="1" stroke-dasharray="2 2" opacity="0.7"/>
<path d="M151 298.5H978" stroke="#b0b0b0" stroke-width="1" stroke-dasharray="2 2" opacity="0.7"/>
<path d="M151 316.5H978" stroke="#b0b0b0" stroke-width="1" stroke-dasharray="2 2" opacity="0.7"/>
<path d="M151 569.5H978" stroke="#b0b0b0" stroke-width="1" stroke-dasharray="2 2" opacity="0.7"/>
<path d="M151 587.5H978" stroke="#d08c64" stroke-width="2" stroke-dasharray="2 2" opacity="0.5"/>
<path d="M565.5 190V654" stroke="#b0b0b0" stroke-width="1" stroke-dasharray="2 2" opacity="0.7"/>
<path d="M283.5 190V654M846.5 190V654" stroke="#e08a58" stroke-width="1" stroke-dasharray="2 2" opacity="0.55"/>
</svg>
<svg style="left:0;top:0" width="1280" height="679" viewBox="0 0 1280 679" font-family="Liberation Sans, sans-serif">
<rect x="352.5" y="279.5" width="427" height="285" fill="none" stroke="#989898" stroke-width="1.5"/>
<path d="M365 527.5H772M365 502.5H772M365 478.5H772M365 454.5H772M365 430.5H772M365 405.5H772M365 381.5H772M365 357.5H772M365 333.5H772M365 308.5H772" stroke="#dfdfdf" stroke-width="1" fill="none" shape-rendering="crispEdges"/>
<text x="358" y="530.2" font-size="7.5" fill="#595959" text-anchor="middle">0</text>
<text x="358" y="505.2" font-size="7.5" fill="#595959" text-anchor="middle">1</text>
<text x="358" y="481.2" font-size="7.5" fill="#595959" text-anchor="middle">2</text>
<text x="358" y="457.2" font-size="7.5" fill="#595959" text-anchor="middle">3</text>
<text x="358" y="433.2" font-size="7.5" fill="#595959" text-anchor="middle">4</text>
<text x="358" y="408.2" font-size="7.5" fill="#595959" text-anchor="middle">5</text>
<text x="358" y="384.2" font-size="7.5" fill="#595959" text-anchor="middle">6</text>
<text x="358" y="360.2" font-size="7.5" fill="#595959" text-anchor="middle">7</text>
<text x="358" y="336.2" font-size="7.5" fill="#595959" text-anchor="middle">8</text>
<text x="358" y="311.2" font-size="7.5" fill="#595959" text-anchor="middle">9</text>
<text x="386.6" y="540.4" font-size="7.4" fill="#595959" text-anchor="middle">类别 1</text>
<text x="427.0" y="540.4" font-size="7.4" fill="#595959" text-anchor="middle">类别 2</text>
<text x="467.4" y="540.4" font-size="7.4" fill="#595959" text-anchor="middle">类别 3</text>
<text x="508.0" y="540.4" font-size="7.4" fill="#595959" text-anchor="middle">类别 4</text>
<text x="565" y="297.4" font-size="13" fill="#666" text-anchor="middle">系列 1</text>
<path d="M546.5 553H560.5" stroke="#5b82b5" stroke-width="1.4"/>
<text x="561.5" y="555.8" font-size="7.4" fill="#595959">系列 1</text>
<path d="M386.2 422.5 C394.2 422.1 410.3 421.0 426.4 420.4 C442.5 419.8 450.6 419.8 466.8 419.3 C483.0 418.8 491.2 422.2 507.4 418.1 C523.6 414.0 531.4 407.9 547.6 398.6 C563.8 389.3 572.0 380.1 588.2 371.8 C604.4 363.5 612.5 361.7 628.6 357.2 C644.7 352.7 652.7 353.2 668.9 349.4 C685.1 345.6 693.4 341.3 709.6 338.1 C725.8 334.9 741.9 334.2 750.0 333.2" fill="none" stroke="#5d80b0" stroke-width="1.6" stroke-linecap="round"/>
<g transform="translate(386.2 422.5)"><rect x="-3.6" y="-3.6" width="7.2" height="7.2" rx="2.3" fill="#d4eaf6" stroke="#3794c8" stroke-width="1.5"/><path d="M-3.6 0H3.6M0 -3.6V3.6" stroke="#3794c8" stroke-width="1.5"/></g>
<g transform="translate(426.4 420.4)"><rect x="-3.6" y="-3.6" width="7.2" height="7.2" rx="2.3" fill="#d4eaf6" stroke="#3794c8" stroke-width="1.5"/><path d="M-3.6 0H3.6M0 -3.6V3.6" stroke="#3794c8" stroke-width="1.5"/></g>
<g transform="translate(466.8 419.3)"><rect x="-3.6" y="-3.6" width="7.2" height="7.2" rx="2.3" fill="#d4eaf6" stroke="#3794c8" stroke-width="1.5"/><path d="M-3.6 0H3.6M0 -3.6V3.6" stroke="#3794c8" stroke-width="1.5"/></g>
<g transform="translate(507.4 418.1)"><rect x="-3.6" y="-3.6" width="7.2" height="7.2" rx="2.3" fill="#d4eaf6" stroke="#3794c8" stroke-width="1.5"/><path d="M-3.6 0H3.6M0 -3.6V3.6" stroke="#3794c8" stroke-width="1.5"/></g>
<g transform="translate(547.6 398.6)"><rect x="-3.6" y="-3.6" width="7.2" height="7.2" rx="2.3" fill="#d4eaf6" stroke="#3794c8" stroke-width="1.5"/><path d="M-3.6 0H3.6M0 -3.6V3.6" stroke="#3794c8" stroke-width="1.5"/></g>
<g transform="translate(588.2 371.8)"><rect x="-3.6" y="-3.6" width="7.2" height="7.2" rx="2.3" fill="#d4eaf6" stroke="#3794c8" stroke-width="1.5"/><path d="M-3.6 0H3.6M0 -3.6V3.6" stroke="#3794c8" stroke-width="1.5"/></g>
<g transform="translate(628.6 357.2)"><rect x="-3.6" y="-3.6" width="7.2" height="7.2" rx="2.3" fill="#d4eaf6" stroke="#3794c8" stroke-width="1.5"/><path d="M-3.6 0H3.6M0 -3.6V3.6" stroke="#3794c8" stroke-width="1.5"/></g>
<g transform="translate(668.9 349.4)"><rect x="-3.6" y="-3.6" width="7.2" height="7.2" rx="2.3" fill="#d4eaf6" stroke="#3794c8" stroke-width="1.5"/><path d="M-3.6 0H3.6M0 -3.6V3.6" stroke="#3794c8" stroke-width="1.5"/></g>
<g transform="translate(709.6 338.1)"><rect x="-3.6" y="-3.6" width="7.2" height="7.2" rx="2.3" fill="#d4eaf6" stroke="#3794c8" stroke-width="1.5"/><path d="M-3.6 0H3.6M0 -3.6V3.6" stroke="#3794c8" stroke-width="1.5"/></g>
<g transform="translate(750.0 333.2)"><rect x="-3.6" y="-3.6" width="7.2" height="7.2" rx="2.3" fill="#d4eaf6" stroke="#3794c8" stroke-width="1.5"/><path d="M-3.6 0H3.6M0 -3.6V3.6" stroke="#3794c8" stroke-width="1.5"/></g>
<circle cx="352" cy="279" r="4.6" fill="#fafafa" stroke="#555" stroke-width="1.9"/>
<circle cx="565.5" cy="279" r="4.6" fill="#fafafa" stroke="#555" stroke-width="1.9"/>
<circle cx="779" cy="279" r="4.6" fill="#fafafa" stroke="#555" stroke-width="1.9"/>
<circle cx="352" cy="421.5" r="4.6" fill="#fafafa" stroke="#555" stroke-width="1.9"/>
<circle cx="779" cy="421.5" r="4.6" fill="#fafafa" stroke="#555" stroke-width="1.9"/>
<circle cx="352" cy="564" r="4.6" fill="#fafafa" stroke="#555" stroke-width="1.9"/>
<circle cx="565.5" cy="564" r="4.6" fill="#fafafa" stroke="#555" stroke-width="1.9"/>
<circle cx="779" cy="564" r="4.6" fill="#fafafa" stroke="#555" stroke-width="1.9"/>
</svg>
<div class="abs" style="left:790px;top:278px;width:28px;height:29px;background:#fff;border:1px solid #9e9e9e"></div>
<div class="abs" style="left:790px;top:316px;width:28px;height:29px;background:#fff;border:1px solid #9e9e9e"></div>
<div class="abs" style="left:790px;top:354px;width:28px;height:29px;background:#fff;border:1px solid #9e9e9e"></div>
<svg style="left:797px;top:285px" width="14" height="14" viewBox="0 0 14 14"><path d="M5.3 0.6H8.7V5.3H13.4V8.7H8.7V13.4H5.3V8.7H0.6V5.3H5.3Z" fill="#4c9a82"/></svg>
<svg style="left:795px;top:321px" width="19" height="19" viewBox="0 0 19 19"><path d="M15.6 1.2L17.4 2.6L13.2 9.8L10.6 8.4Z" fill="#454545"/><path d="M10.2 8.6L13.3 10.5C12.8 15 6.2 18 0.6 16.9C4.2 15 5 9.8 10.2 8.6Z" fill="#3a6c96"/><path d="M7.4 11.6C6.4 12.8 5.8 14 4.8 14.8C6.8 14.6 8.2 13.4 8.8 12.4Z" fill="#e6eef6"/></svg>
<svg style="left:794px;top:360px" width="20" height="18" viewBox="0 0 20 18"><path d="M0.6 1H19.4V2.6L11.8 10V17.6H8.2V10L0.6 2.6Z" fill="#464646"/></svg>
<!--W-END-->
<!--WORK-CONTENT-->
<!-- PANEL -->
<!--P-START-->
<div class="abs" style="left:995px;top:189px;width:2px;height:467px;background:#5e5e5e"></div>
<div class="t" style="left:1006px;top:199px;font-size:21.3px;letter-spacing:0.2px;line-height:28px;color:#ececec">设置数据系列格式</div>
<svg style="left:1210px;top:206px" width="15" height="9" viewBox="0 0 15 9"><path d="M1 1L7.5 7.5L14 1" fill="none" stroke="#eee" stroke-width="1.3"/></svg>
<svg style="left:1253px;top:204px" width="12" height="12" viewBox="0 0 12 12"><path d="M1 1L11 11M11 1L1 11" fill="none" stroke="#eee" stroke-width="1.3"/></svg>
<div class="t" style="left:1010px;top:236px;font-weight:bold;font-size:12px">系列选项</div>
<svg style="left:1064px;top:241px" width="10" height="6" viewBox="0 0 10 6"><path d="M0 0H10L5 5.6Z" fill="#bdbdbd"/></svg>
<!-- icon tabs -->
<div class="abs" style="left:1008px;top:263px;width:31px;height:31px;background:#3f3f3f;border:1px solid #a8a8a8"></div>
<svg style="left:1011px;top:266px" width="26" height="26" viewBox="0 0 26 26">
 <path d="M10.4 6.6L19.4 14L11 22.2L1.8 14.6Z" fill="#d8441f" stroke="#f6e9e4" stroke-width="1.1"/>
 <path d="M9.4 10V4.4Q9.4 1.8 11.2 1.8Q13 2 13.4 4.6L13.8 8" fill="none" stroke="#f4f4f4" stroke-width="1.1"/>
 <circle cx="11.4" cy="10.4" r="1" fill="#f6d9d0"/>
 <path d="M14.4 7.6Q22.8 9.4 21.6 19.4Q21 22 19.6 19.6Q20.8 13.4 15.6 10.6Z" fill="#f4f4f4"/>
</svg>
<svg style="left:1049px;top:266px" width="23" height="24" viewBox="0 0 23 24"><path d="M11.5 1.4L21.6 8.8L17.8 20.4H5.2L1.4 8.8Z" fill="none" stroke="#e4e4e4" stroke-width="1.3"/><path d="M5.2 20.4L3.8 23M17.8 20.4L19.2 23" stroke="#bdbdbd" stroke-width="1.2"/></svg>
<svg style="left:1087px;top:267px" width="21" height="22" viewBox="0 0 21 22"><path d="M0.8 21V8.4H6.8V21M6.8 21V0.8H13.6V21M13.6 21V5.2H19.8V21Z" fill="none" stroke="#c9c9c9" stroke-width="1.3"/><path d="M0.2 21H20.4" stroke="#c9c9c9" stroke-width="1.3"/></svg>
<!-- separator w/ notch -->
<svg style="left:1006px;top:298px" width="264" height="12" viewBox="0 0 264 12"><path d="M0 10.5H9L15.5 3L22 10.5H264" fill="none" stroke="#a6a6a6" stroke-width="1.1"/></svg>
<!-- clipped first row -->
<div class="abs" style="left:1000px;top:310px;width:250px;height:12px;overflow:hidden">
 <div class="t" style="left:37px;top:-7px;color:#e8e8e8">透明度(T)</div>
 <div class="abs" style="left:99px;top:2px;width:2px;height:2px;background:#eee"></div>
</div>
<div class="abs" style="left:1147px;top:310px;width:101px;height:12px;background:#d6d6d6;overflow:hidden"><div class="rt" style="left:6px;top:-8px;font-size:13px;color:#333">0%</div></div>
<svg style="left:1236px;top:314px" width="7" height="5"><use href="#chev"/></svg>
<!-- rows -->
<div class="t" style="left:1037px;top:332px;color:#f2f2f2">宽度(<u>W</u>)</div>
<div class="abs" style="left:1147px;top:329px;width:101px;height:22px;background:#d6d6d6"></div>
<div class="rt" style="left:1153px;top:332px;font-size:13px;line-height:15px;color:#333">2.25 磅</div>
<svg style="left:1236px;top:331px" width="7" height="5" viewBox="0 0 7 5"><path d="M0.7 4L3.5 1.2L6.3 4" fill="none" stroke="#444" stroke-width="1.2"/></svg>
<svg style="left:1236px;top:342px" width="7" height="5"><use href="#chev"/></svg>

<div class="t" style="left:1037px;top:363px;color:#f2f2f2">复合类型(<u>C</u>)</div>
<div class="abs" style="left:1205px;top:358px;width:43px;height:26px;background:#d6d6d6"></div>
<svg style="left:1214px;top:364px" width="16" height="12" viewBox="0 0 16 12"><path d="M0 2H16" stroke="#2f5e9e" stroke-width="2.6"/><path d="M0 6H16" stroke="#2f5e9e" stroke-width="1.2"/><path d="M0 10H16" stroke="#2f5e9e" stroke-width="2.6"/></svg>
<svg style="left:1236px;top:368px" width="7" height="4" viewBox="0 0 7 4"><path d="M0 0H7L3.5 4Z" fill="#222"/></svg>

<div class="t" style="left:1037px;top:396px;color:#f2f2f2">短划线类型(<u>D</u>)</div>
<div class="abs" style="left:1205px;top:391px;width:43px;height:26px;background:#d6d6d6"></div>
<svg style="left:1214px;top:398px" width="16" height="10" viewBox="0 0 16 10"><path d="M0 1H16" stroke="#555" stroke-width="1"/><path d="M0 4.5H16" stroke="#555" stroke-width="1" stroke-dasharray="1.2 1"/><path d="M0 8H16" stroke="#555" stroke-width="1" stroke-dasharray="2.4 1.2"/></svg>
<svg style="left:1236px;top:401px" width="7" height="4" viewBox="0 0 7 4"><path d="M0 0H7L3.5 4Z" fill="#222"/></svg>

<div class="t" style="left:1037px;top:427px;color:#f2f2f2">线端类型(<u>A</u>)</div>
<div class="abs" style="left:1201px;top:424px;width:47px;height:21px;background:#d6d6d6"></div>
<div class="rt" style="left:1206px;top:428px;color:#333">圆</div>
<svg style="left:1236px;top:432px" width="7" height="4" viewBox="0 0 7 4"><path d="M0 0H7L3.5 4Z" fill="#222"/></svg>

<div class="t" style="left:1037px;top:454px;color:#f2f2f2">连接类型(<u>J</u>)</div>
<div class="abs" style="left:1197px;top:451px;width:51px;height:21px;background:#d6d6d6"></div>
<div class="rt" style="left:1202px;top:455px;color:#333">圆角</div>
<svg style="left:1236px;top:459px" width="7" height="4" viewBox="0 0 7 4"><path d="M0 0H7L3.5 4Z" fill="#222"/></svg>

<div class="t" style="left:1037px;top:484px;color:#f2f2f2">开始箭头类型(<u>B</u>)</div>
<div class="abs" style="left:1205px;top:479px;width:43px;height:26px;background:#d6d6d6"></div>
<svg style="left:1214px;top:484px" width="17" height="15" viewBox="0 0 17 15" fill="none" stroke="#2f5e9e" stroke-width="1.1"><path d="M0.5 3H16M13.4 0.6L16 3L13.4 5.4"/><path d="M0.5 7.5H16" stroke-dasharray="1.6 1.2"/><path d="M0.8 12H16M3.2 9.6L0.6 12L3.2 14.4M13.6 9.6L16.2 12L13.6 14.4"/></svg>
<svg style="left:1236px;top:489px" width="7" height="4" viewBox="0 0 7 4"><path d="M0 0H7L3.5 4Z" fill="#222"/></svg>

<div class="t" style="left:1037px;top:517px;color:#f2f2f2">开始箭头粗细(<u>S</u>)</div>
<div class="abs" style="left:1205px;top:513px;width:43px;height:26px;background:#d6d6d6"></div>
<svg style="left:1214px;top:518px" width="16" height="14" viewBox="0 0 16 14"><path d="M0 1.2H16M0 4.8H16M0 8.6H16" stroke="#2f5e9e" stroke-width="2.2"/><path d="M0 12.4H16" stroke="#2f5e9e" stroke-width="2.6"/></svg>
<svg style="left:1236px;top:523px" width="7" height="4" viewBox="0 0 7 4"><path d="M0 0H7L3.5 4Z" fill="#222"/></svg>

<div class="t" style="left:1037px;top:550px;color:#f2f2f2">结尾箭头类型(<u>E</u>)</div>
<div class="abs" style="left:1205px;top:546px;width:43px;height:26px;background:#d6d6d6"></div>
<svg style="left:1214px;top:551px" width="17" height="15" viewBox="0 0 17 15" fill="none" stroke="#2f5e9e" stroke-width="1.1"><path d="M0.5 3H16M13.4 0.6L16 3L13.4 5.4"/><path d="M0.5 7.5H16" stroke-dasharray="1.6 1.2"/><path d="M0.8 12H16M3.2 9.6L0.6 12L3.2 14.4M13.6 9.6L16.2 12L13.6 14.4"/></svg>
<svg style="left:1236px;top:556px" width="7" height="4" viewBox="0 0 7 4"><path d="M0 0H7L3.5 4Z" fill="#222"/></svg>

<div class="t" style="left:1037px;top:583px;color:#f2f2f2">结尾箭头粗细(<u>N</u>)</div>
<div class="abs" style="left:1205px;top:579px;width:43px;height:26px;background:#d6d6d6"></div>
<svg style="left:1214px;top:584px" width="16" height="14" viewBox="0 0 16 14"><path d="M0 1.2H16M0 4.8H16M0 8.6H16" stroke="#2f5e9e" stroke-width="2.2"/><path d="M0 12.4H16" stroke="#2f5e9e" stroke-width="2.6"/></svg>
<svg style="left:1236px;top:589px" width="7" height="4" viewBox="0 0 7 4"><path d="M0 0H7L3.5 4Z" fill="#222"/></svg>

<!-- checkbox -->
<div class="abs" style="left:1037px;top:613px;width:13px;height:13px;background:#d14a2c;border:1px solid #f0a090"></div>
<svg style="left:1039px;top:616px" width="9" height="7" viewBox="0 0 9 7"><path d="M1 3.4L3.4 5.8L8.2 1" fill="none" stroke="#fff" stroke-width="1.5"/></svg>
<div class="t" style="left:1056px;top:612px;color:#f2f2f2">平滑线(<u>M</u>)</div>
<div class="abs" style="left:1018px;top:602px;width:174px;height:37.5px;border:3.5px solid #e83030"></div>
<!-- scrollbar -->
<div class="abs" style="left:1252px;top:313px;width:15px;height:326px;background:#d2d2d2"></div>
<div class="abs" style="left:1252px;top:330px;width:15px;height:115px;background:#4a4a4a"></div>
<div class="abs" style="left:1252px;top:329px;width:15px;height:1px;background:#6a6a6a"></div>
<div class="abs" style="left:1252px;top:622px;width:15px;height:1px;background:#8a8a8a"></div>
<svg style="left:1256px;top:319px" width="7" height="4" viewBox="0 0 7 4"><path d="M0 4H7L3.5 0Z" fill="#222"/></svg>
<svg style="left:1256px;top:629px" width="7" height="4" viewBox="0 0 7 4"><path d="M0 0H7L3.5 4Z" fill="#222"/></svg>
<!--P-END-->
<!-- STATUS -->
<div id="status" class="abs"></div>
<!--S-START-->
<div class="t" style="left:11px;top:660px;color:#f0f0f0">幻灯片 第 1 张，共 1 张</div>
<svg style="left:157px;top:661px" width="14" height="12" viewBox="0 0 14 12" fill="none" stroke="#e6e6e6" stroke-width="1"><path d="M7.5 0.6H0.6V10.6H9.4V8"/><path d="M7.5 0.6V3H10"/><path d="M6.6 7.4L8 8.8L12.6 3.6" stroke-width="1.1"/></svg>
<div class="t" style="left:187px;top:660px;color:#f0f0f0">简体中文(中国大陆)</div>
<svg style="left:307px;top:661px" width="14" height="14" viewBox="0 0 14 14" fill="none" stroke="#f0f0f0" stroke-width="1.1"><path d="M9.4 1.6A4.6 4.6 0 1 0 10 9"/><path d="M4.6 3.8L7 5.6L4.6 7.6"/><path d="M8 8L12.6 12.6M12.6 8L8 12.6" stroke-width="1.2"/></svg>
<div class="t" style="left:323px;top:660px;font-weight:bold;color:#f4f4f4;letter-spacing:-0.2px">辅助功能: 调查</div>
<svg style="left:803px;top:662px" width="11" height="11" viewBox="0 0 11 11"><path d="M0 4.6H11M0 7.4H11M0 10.2H11" stroke="#d4d4d4" stroke-width="1"/><path d="M5.5 0.4L7.6 2.6H3.4Z" fill="#d4d4d4"/></svg>
<div class="t" style="left:818px;top:660px;color:#f0f0f0">备注</div>
<svg style="left:861px;top:661px" width="14" height="12" viewBox="0 0 14 12"><path d="M0.4 0.4H13.6V8.6H5.4L3.2 11.4V8.6H0.4Z" fill="#e6e6e6"/></svg>
<div class="t" style="left:878px;top:660px;color:#f0f0f0">批注</div>
<div class="abs" style="left:921px;top:657px;width:40px;height:22px;background:#484848"></div>
<svg style="left:934px;top:661px" width="13" height="12" viewBox="0 0 13 12"><rect x="0.5" y="0.5" width="12" height="11" fill="#f4f4f4" stroke="#f4f4f4"/><rect x="4.6" y="2.4" width="6" height="4.6" fill="#444"/><path d="M3 1V11" stroke="#444" stroke-width="0.9"/><path d="M4.6 8.8H10.6" stroke="#444" stroke-width="0.9"/></svg>
<svg style="left:974px;top:661px" width="13" height="12" viewBox="0 0 13 12" fill="#ededed"><rect x="0" y="0" width="6" height="5.4"/><rect x="7" y="0" width="6" height="5.4"/><rect x="0" y="6.4" width="6" height="5.4"/><rect x="7" y="6.4" width="6" height="5.4"/></svg>
<svg style="left:1014px;top:661px" width="14" height="12" viewBox="0 0 14 12"><path d="M0.6 1.4Q4 0 7 1.6Q10 0 13.4 1.4V11Q10 9.8 7 11.4Q4 9.8 0.6 11Z" fill="#8e8e8e" stroke="#a4a4a4" stroke-width="0.8"/><path d="M7 1.6V11.4M3 1.4V10M11 1.4V10" stroke="#6a6a6a" stroke-width="0.8"/></svg>
<svg style="left:1054px;top:661px" width="14" height="13" viewBox="0 0 14 13" fill="none" stroke="#e6e6e6" stroke-width="1.1"><path d="M0 0.8H14"/><rect x="1.6" y="0.8" width="10.8" height="6.4"/><path d="M7 7.2V11.4M4 12H10M4.6 4H9.4"/></svg>
<div class="abs" style="left:1084px;top:667px;width:8px;height:1px;background:#e6e6e6"></div>
<div class="abs" style="left:1099px;top:667px;width:98px;height:1px;background:#e6e6e6"></div>
<div class="abs" style="left:1147px;top:664px;width:1px;height:7px;background:#e6e6e6"></div>
<div class="abs" style="left:1119px;top:662px;width:5px;height:11px;background:#f6f6f6"></div>
<div class="abs" style="left:1204px;top:667px;width:7px;height:1px;background:#e6e6e6"></div>
<div class="abs" style="left:1207px;top:664px;width:1px;height:7px;background:#e6e6e6"></div>
<div class="t l" style="left:1223px;top:660px;font-size:13px;color:#f0f0f0">50%</div>
<svg style="left:1263.5px;top:662px" width="10.5" height="10.5" viewBox="0 0 11 11" fill="none" stroke="#e6e6e6" stroke-width="1"><rect x="0.5" y="0.5" width="10" height="10"/><path d="M3 4.4V3H4.4M6.6 3H8V4.4M8 6.6V8H6.6M4.4 8H3V6.6" stroke-width="0.9"/></svg>
<!--S-END-->
</body>
</html>
